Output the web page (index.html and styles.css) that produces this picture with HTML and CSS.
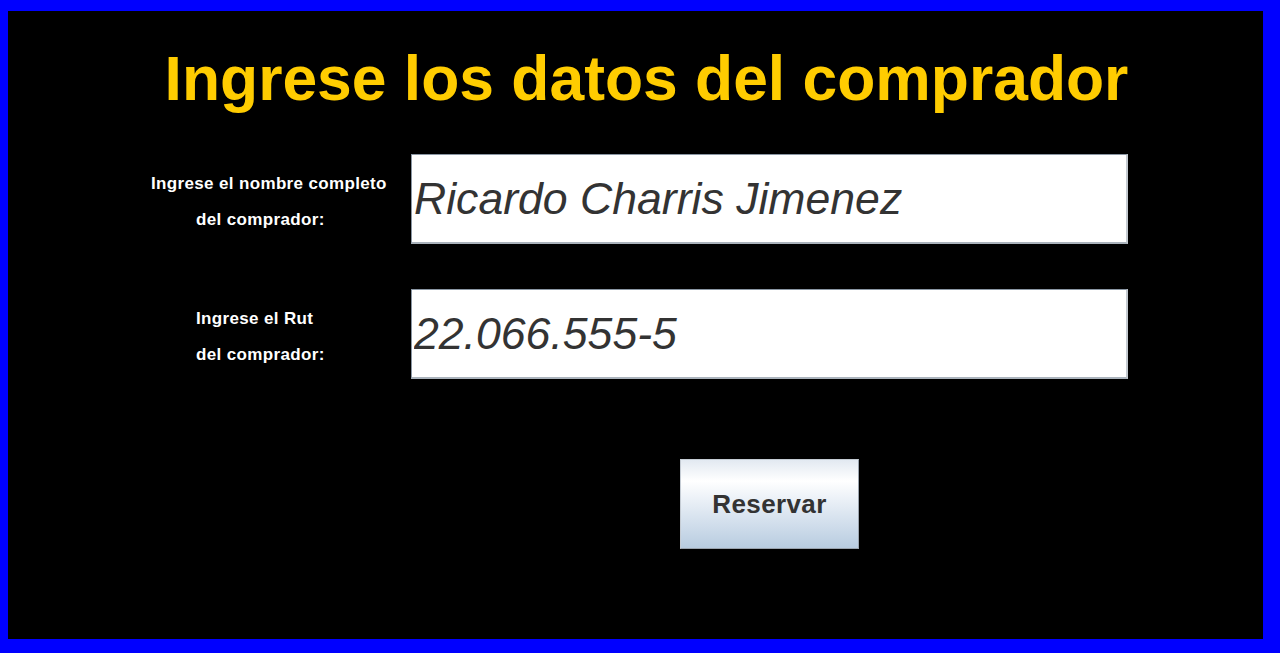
FILE: index.html
```html
<!DOCTYPE html>
<html lang="es">
<head>
<meta charset="utf-8">
<title>Datos del comprador</title>
<link rel="stylesheet" href="styles.css">
</head>
<body>
<div class="frame">
  <h1 class="title">Ingrese los datos del comprador</h1>
  <div class="form">
    <div class="row">
      <div class="label">
        <span class="line">Ingrese el nombre completo</span>
        <span class="line indent">del comprador:</span>
      </div>
      <input class="field" type="text" value="Ricardo Charris Jimenez" readonly>
    </div>
    <div class="row">
      <div class="label">
        <span class="line indent">Ingrese el Rut</span>
        <span class="line indent">del comprador:</span>
      </div>
      <input class="field" type="text" value="22.066.555-5" readonly>
    </div>
  </div>
  <div class="actions">
    <button class="btn" type="button">Reservar</button>
  </div>
</div>
</body>
</html>
```

FILE: styles.css
```css
html, body {
  margin: 0;
  padding: 0;
  background: #0000ff;
}

.frame {
  box-sizing: border-box;
  width: 1280px;
  height: 653px;
  border-style: solid;
  border-color: #0000ff;
  border-width: 11px 17px 14px 8px;
  background: #000000;
  font-family: "Liberation Sans", Arial, sans-serif;
}

.title {
  margin: 0;
  padding: 32px 0 0 22px;
  font-size: 62.4px;
  line-height: 72px;
  font-weight: bold;
  color: #ffcc00;
  text-align: center;
}

.form {
  margin-top: 39px;
  padding-left: 143px;
  display: flex;
  flex-direction: column;
  gap: 45px;
}

.row {
  display: flex;
  align-items: flex-start;
}

.label {
  width: 260px;
  padding-top: 12px;
  color: #ffffff;
  font-weight: bold;
  font-size: 17px;
  line-height: 36px;
  letter-spacing: 0.35px;
}

.line {
  display: block;
  white-space: nowrap;
}

.indent {
  padding-left: 45px;
}

.field {
  box-sizing: border-box;
  width: 717px;
  height: 90px;
  margin: 0;
  padding: 0 2px;
  background: #ffffff;
  border-style: solid;
  border-width: 1px 2px 2px 1px;
  border-color: #8a96a3 #c3c9cf #aab3bc #8a96a3;
  font-family: "Liberation Sans", Arial, sans-serif;
  font-style: italic;
  font-size: 44.6px;
  color: #333333;
  outline: none;
}

.actions {
  margin-top: 80px;
  padding-left: 672px;
}

.btn {
  box-sizing: border-box;
  width: 179px;
  height: 90px;
  margin: 0;
  padding: 0;
  border: 1px solid #9aa3ad;
  border-top-color: #c5ccd4;
  border-left-color: #c5ccd4;
  background: linear-gradient(to bottom, #e2e9f1 0%, #ffffff 24%, #e6edf5 50%, #b8cce0 100%);
  font-family: "Liberation Sans", Arial, sans-serif;
  font-weight: bold;
  font-size: 26px;
  letter-spacing: 0.4px;
  color: #333333;
}
```
